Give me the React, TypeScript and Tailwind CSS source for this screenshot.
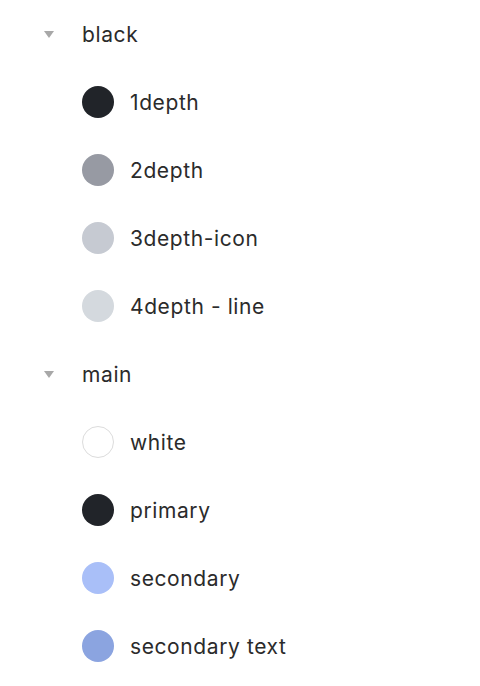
const GROUPS = [
  {
    name: 'black',
    items: [
      { label: '1depth', color: 'bg-[#212429]' },
      { label: '2depth', color: 'bg-[#979aa3]' },
      { label: '3depth-icon', color: 'bg-[#c6cad2]' },
      { label: '4depth - line', color: 'bg-[#d4d9de]' },
    ],
  },
  {
    name: 'main',
    items: [
      { label: 'white', color: 'bg-white border border-[#dcdcdc]' },
      { label: 'primary', color: 'bg-[#212429]' },
      { label: 'secondary', color: 'bg-[#a9bff8]' },
      { label: 'secondary text', color: 'bg-[#8ba4e0]' },
    ],
  },
]

export default function App() {
  return (
    <div className="min-h-[686px] w-[480px] bg-white font-['Inter',sans-serif] text-[21px] tracking-[0.6px] text-[#2b2b2b]">
      {GROUPS.map(g => (
        <div key={g.name}>
          <div className="flex h-[68px] items-center">
            <span className="ml-[44px] mr-[28px] block h-0 w-0 border-x-[5px] border-t-[7px] border-x-transparent border-t-[#a8a8a8]" />
            <span className="mt-[2px]">{g.name}</span>
          </div>
          {g.items.map(it => (
            <div key={it.label} className="flex h-[68px] items-center pl-[82px]">
              <span className={`h-8 w-8 shrink-0 rounded-full ${it.color}`} />
              <span className="ml-4 mt-[2px]">{it.label}</span>
            </div>
          ))}
        </div>
      ))}
    </div>
  )
}
